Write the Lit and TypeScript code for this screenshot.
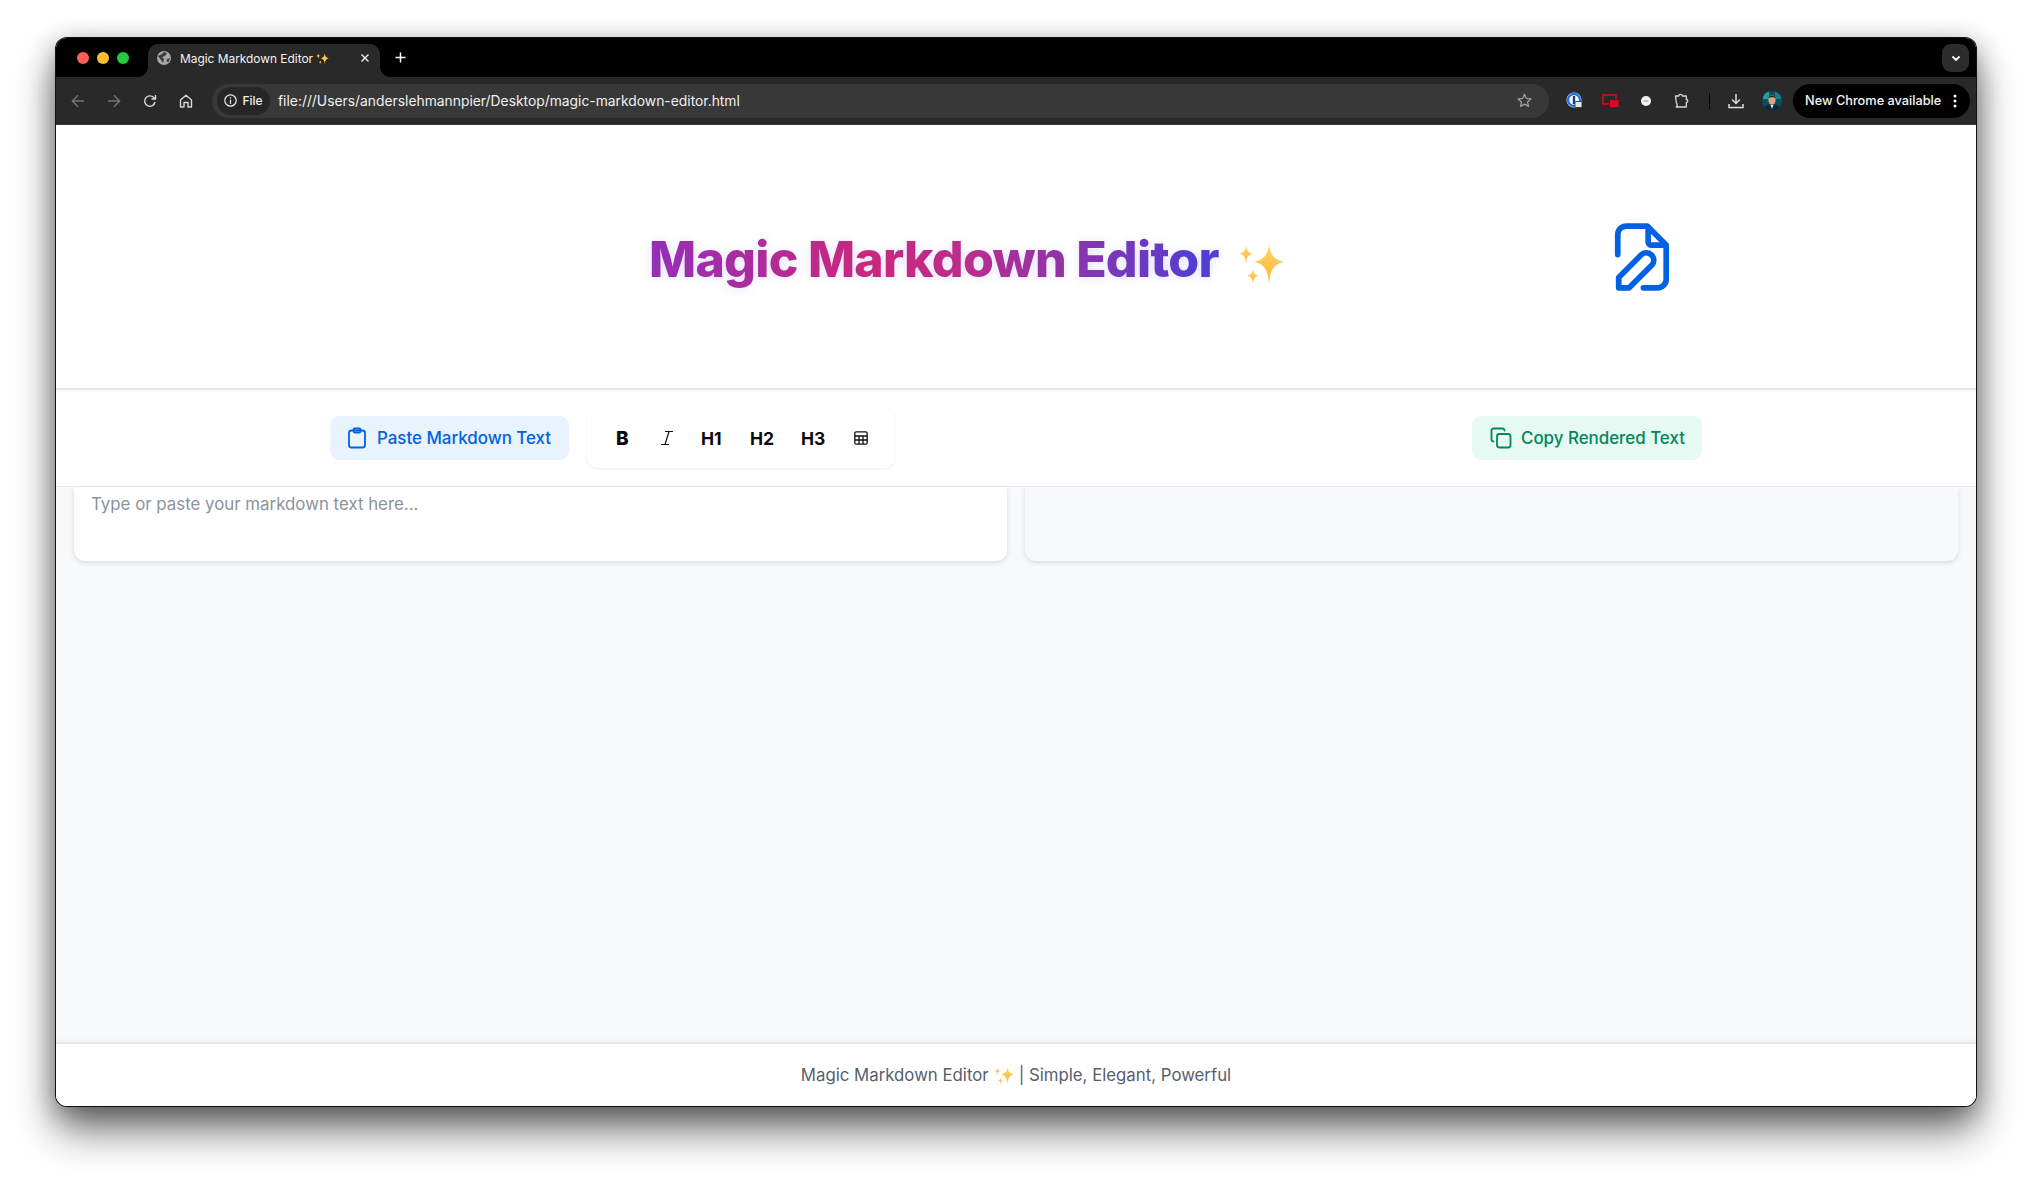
import { LitElement, html, css } from "lit";
import { customElement } from "lit/decorators.js";

const sparkle = (size: number) => html`<svg class="sp" width=${size} height=${size} viewBox="0 0 40 40" aria-hidden="true">
  <defs><linearGradient id="g${size}" x1="0" y1="0" x2="0" y2="1"><stop offset="0" stop-color="#ffd966"/><stop offset="1" stop-color="#fdb33a"/></linearGradient></defs>
  <path d="M27 2 C27.600 12 30 16.500 40 19 C30 21.500 27.800 27 27 39 C26.200 27 24 21.500 14 19 C24 16.500 26.400 12 27 2Z" fill="url(#g${size})"/>
  <path d="M7 4 C7.400 9 8.600 11 12.500 12 C8.600 13 7.400 15 7 21 C6.600 15 5.400 13 1.500 12 C5.400 11 6.600 9 7 4Z" fill="url(#g${size})"/>
  <path d="M13 25 C13.300 28 14.300 30 18 31 C14.300 32 13.300 34 13 39 C12.700 34 11.700 32 8 31 C11.700 30 12.700 28 13 25Z" fill="url(#g${size})"/>
</svg>`;

@customElement("app-root")
export class AppRoot extends LitElement {
  static styles = css`
    :host { display: block; width: 2032px; height: 1179px; overflow: hidden; background: #fff; font-family: Inter, "Liberation Sans", sans-serif; padding: 38px 56px 0 56px; box-sizing: border-box; }
    .win { width: 1920px; height: 1068px; border-radius: 11px; background: #fff; display: flex; flex-direction: column; overflow: hidden; box-shadow: 0 0 0 1px #111, 0 24px 42px rgba(0,0,0,.55), 0 6px 26px rgba(0,0,0,.32); }
    .tabs { height: 39px; background: #000; display: flex; align-items: flex-end; flex: none; position: relative; }
    .lights { display: flex; gap: 8px; padding-left: 21px; align-self: flex-start; margin-top: 14px; box-sizing: border-box; flex: none; width: 92px; }
    .lights i { width: 12px; height: 12px; border-radius: 50%; }
    .tab { width: 232px; height: 33px; background: #292929; border-radius: 10px 10px 0 0; display: flex; align-items: center; color: #f2f2f2; box-sizing: border-box; padding: 0 10px 5px 9px; position: relative; flex: none; }
    .tab::before, .tab::after { content: ""; position: absolute; bottom: 0; width: 10px; height: 10px; }
    .tab::before { left: -10px; background: radial-gradient(circle at 0 0, #000 9.5px, #292929 10px); }
    .tab::after { right: -10px; background: radial-gradient(circle at 100% 0, #000 9.5px, #292929 10px); }
    .tab .title { margin-left: 9px; flex: 1; white-space: nowrap; display: flex; align-items: center; gap: 3px; font-size: 11.9px; }
    .plus { margin: 0 0 0 15px; align-self: center; display: flex; }
    .chev { position: absolute; right: 7px; top: 6px; width: 27px; height: 28px; border-radius: 9px; background: #2c2c2c; display: flex; align-items: center; justify-content: center; }
    .bar { height: 48px; background: #292929; border-bottom: 1px solid #3c3c3c; flex: none; display: flex; align-items: center; box-sizing: border-box; padding: 0 6px 0 4px; }
    .nav { width: 36px; display: flex; justify-content: center; flex: none; }
    .omni { flex: 1; height: 34px; border-radius: 17px; background: #383838; display: flex; align-items: center; margin-left: 8px; padding: 0 17px 0 5px; box-sizing: border-box; color: #f0f0f0; }
    .chip { height: 28px; width: 53px; border-radius: 14px; background: #262626; display: flex; align-items: center; justify-content: center; gap: 5px; font-size: 12px; font-weight: 500; flex: none; box-sizing: border-box; }
    .url { margin-left: 8px; flex: 1; font-size: 13.85px; white-space: nowrap; }
    .ext { display: flex; align-items: center; justify-content: center; width: 36px; flex: none; }
    .ext.first { margin-left: 7px; }
    .sep { width: 1px; height: 16px; background: #000; margin: 0 8px 0 9px; flex: none; }
    .update { height: 34px; width: 177px; border-radius: 17px; background: #000; color: #f4f4f4; font-size: 12.75px; font-weight: 500; display: flex; align-items: center; padding-left: 12px; box-sizing: border-box; margin-left: 3px; flex: none; white-space: nowrap; }
    .update svg { margin-left: 12px; flex: none; }
    .head { height: 265px; flex: none; background: #fff; display: flex; align-items: center; padding: 4px 0 0 593px; box-sizing: border-box; border-bottom: 2px solid #e5e7eb; box-shadow: 0 1px 3px rgba(0,0,0,.06); position: relative; z-index: 3; }
    h1 { margin: 0; font-size: 50px; font-weight: 800; letter-spacing: -0.75px; line-height: 62px; background: linear-gradient(90deg, #932fb8 0%, #c9287c 38%, #bd2c8c 55%, #4a3fd8 100%); -webkit-background-clip: text; background-clip: text; color: transparent; filter: drop-shadow(0 1px 5px rgba(99,90,230,.18)); width: 571px; white-space: nowrap; flex: none; }
    .head .sp { margin: 8px 0 0 18px; flex: none; }
    .doc { margin: -4px 0 0 329px; flex: none; }
    .tools { height: 97px; flex: none; background: #fff; border-bottom: 1px solid #e5e7eb; display: flex; align-items: center; justify-content: space-between; padding: 0 274px; box-sizing: border-box; position: relative; z-index: 2; }
    .left { display: flex; align-items: center; gap: 18px; }
    .btn { height: 44px; border-radius: 9px; display: flex; align-items: center; font-size: 16.9px; font-weight: 500; box-sizing: border-box; white-space: nowrap; flex: none; }
    .btn svg { flex: none; }
    .paste { background: #e9f3fd; color: #0062e3; width: 239px; padding-left: 17px; gap: 10px; }
    .copy { background: #e6f9f3; color: #00875a; width: 230px; padding-left: 18px; gap: 9px; }
    .fmt { width: 308px; height: 60px; border-radius: 11px; background: #fff; box-shadow: 0 1px 3px rgba(0,0,0,.07); display: flex; align-items: center; padding-left: 29px; box-sizing: border-box; color: #0a0a0a; }
    .fmt span { font-size: 17.5px; font-weight: 700; display: block; white-space: nowrap; flex: none; }
    .fmt svg { flex: none; }
    .fmt .b { font-size: 19px; width: 44px; font-weight: 800; }
    .fmt .i { margin-right: 27px; }
    .h1 { width: 49px; }
    .h2 { width: 51px; }
    .h3 { width: 53px; }
    .main { flex: 1; background: #f8f9fb; padding: 0 18px; display: grid; grid-template-columns: 1fr 1fr; gap: 18px; align-items: start; }
    .panel { height: 74px; border-radius: 0 0 11px 11px; box-shadow: 0 2px 5px rgba(0,0,0,.12); box-sizing: border-box; }
    .ed { background: #fff; color: #8b929e; font-size: 16.85px; padding: 7px 17px; white-space: nowrap; }
    .pre { background: #f8f9fb; }
    .foot { height: 64px; flex: none; background: #fff; border-top: 2px solid #e5e7eb; box-sizing: border-box; display: flex; align-items: center; justify-content: center; color: #56606e; font-size: 16.8px; gap: 5px; white-space: nowrap; box-shadow: 0 -1px 4px rgba(0,0,0,.05); }
  `;

  render() {
    return html`<div class="win">
      <div class="tabs">
        <div class="lights"><i style="background:#ff5f57"></i><i style="background:#febc2e"></i><i style="background:#28c840"></i></div>
        <div class="tab">
          <svg width="14" height="14" viewBox="0 0 14 14"><circle cx="7" cy="7" r="7" fill="#a8a8a8"/><path d="M1 5 L5 3 L7 1 L10 2 L8 5 L5 6 L7 8 L6 12 L4 9 Z M10 8 L13 7 L11.500 11 L9.500 10.500Z" fill="#3a3a3a"/></svg>
          <div class="title">Magic Markdown Editor ${sparkle(13)}</div>
          <svg width="10" height="10" viewBox="0 0 10 10"><path d="M1.500 1.500 8.500 8.500M8.500 1.500 1.500 8.500" stroke="#eee" stroke-width="1.400"/></svg>
        </div>
        <div class="plus"><svg width="11" height="11" viewBox="0 0 11 11"><path d="M5.500 .5v10M.5 5.500h10" stroke="#fff" stroke-width="1.500"/></svg></div>
        <div class="chev"><svg width="10" height="7" viewBox="0 0 10 7"><path d="M1.500 1.500 5 5l3.500-3.500" fill="none" stroke="#fff" stroke-width="1.800"/></svg></div>
      </div>
      <div class="bar">
        <div class="nav"><svg width="14" height="14" viewBox="0 0 14 14"><path d="M13 7H1.500M7 1.200 1.300 7 7 12.800" fill="none" stroke="#757575" stroke-width="1.400"/></svg></div>
        <div class="nav"><svg width="14" height="14" viewBox="0 0 14 14"><path d="M1 7h11.500M7 1.200 12.700 7 7 12.800" fill="none" stroke="#757575" stroke-width="1.400"/></svg></div>
        <div class="nav"><svg width="14" height="14" viewBox="0 0 14 14"><path d="M12 8a5.200 5.200 0 1 1-1.300-4.500L12.500 5M12.500 1v4h-4" fill="none" stroke="#d8d8d8" stroke-width="1.400"/></svg></div>
        <div class="nav"><svg width="14" height="14" viewBox="0 0 14 14"><path d="M1.500 6 7 1.300 12.500 6v7H9V8.500H5V13H1.500Z" fill="none" stroke="#d8d8d8" stroke-width="1.400" stroke-linejoin="round"/></svg></div>
        <div class="omni">
          <div class="chip"><svg width="13" height="13" viewBox="0 0 13 13"><circle cx="6.500" cy="6.500" r="5.700" fill="none" stroke="#eee" stroke-width="1.200"/><path d="M6.500 5.800v4M6.500 3.200v1.300" stroke="#eee" stroke-width="1.300"/></svg>File</div>
          <div class="url">file:///Users/anderslehmannpier/Desktop/magic-markdown-editor.html</div>
          <svg width="15" height="15" viewBox="0 0 15 15"><path d="M7.500 1.300 9.400 5.400 13.900 5.900 10.500 8.900 11.500 13.400 7.500 11.100 3.500 13.400 4.500 8.900 1.100 5.900 5.600 5.400Z" fill="none" stroke="#a0a0a0" stroke-width="1.300" stroke-linejoin="round"/></svg>
        </div>
        <div class="ext first"><svg width="17" height="17" viewBox="0 0 17 17"><circle cx="8" cy="8" r="7.500" fill="#fff"/><circle cx="8" cy="8" r="6" fill="none" stroke="#1a73e8" stroke-width="2.400"/><rect x="6.800" y="4" width="2.400" height="8" fill="#1a3a78"/><rect x="9" y="9.500" width="7" height="6" rx="1" fill="#e8e8e8" stroke="#292929" stroke-width=".8"/></svg></div>
        <div class="ext"><svg width="17" height="14" viewBox="0 0 17 14"><path d="M7 10H1V1h13v4" fill="none" stroke="#e0071c" stroke-width="1.600"/><rect x="8" y="6" width="8.500" height="7" fill="#e0071c"/></svg></div>
        <div class="ext"><svg width="12" height="12" viewBox="0 0 12 12"><circle cx="6" cy="6" r="5" fill="#f4f4f4"/><path d="M3.500 6h5" stroke="#8a8a8a" stroke-width="1"/></svg></div>
        <div class="ext"><svg width="16" height="16" viewBox="0 0 16 16"><path d="M1.500 3h3.200C4.700 .8 8.300 .8 8.300 3h4v3.500c2 0 2 3 0 3V14h-10c1-1 1-3 0-4.500Z" fill="none" stroke="#d8d8d8" stroke-width="1.300" stroke-linejoin="round"/></svg></div>
        <div class="sep"></div>
        <div class="ext"><svg width="16" height="16" viewBox="0 0 16 16"><path d="M8 1v9M4 6.500 8 10.500l4-4M1 11v3.500h14V11" fill="none" stroke="#dcdcdc" stroke-width="1.500"/></svg></div>
        <div class="ext"><svg width="20" height="20" viewBox="0 0 20 20"><circle cx="10" cy="10" r="10" fill="#0e4f5c"/><path d="M1 6a10 10 0 0 1 6-5.500V8H1Z" fill="#1aa1a6"/><path d="M19 6a10 10 0 0 0-6-5.500V8h6Z" fill="#13808a"/><path d="M2.500 16.600c1-3 4-3.100 7.500-3.100s6.500.1 7.500 3.100a10 10 0 0 1-15 0Z" fill="#13263f"/><path d="M8.500 14 10 18l1.500-4Z" fill="#dfe8ef"/><ellipse cx="10" cy="9" rx="3.600" ry="4.800" fill="#d9a58a"/><path d="M6.300 7.500C6.500 3.500 13.500 3.500 13.700 7.500 12 5.800 8 5.800 6.300 7.500Z" fill="#2a2320"/></svg></div>
        <div class="update">New Chrome available<svg width="4" height="14" viewBox="0 0 4 14"><circle cx="2" cy="2" r="1.500" fill="#fff"/><circle cx="2" cy="7" r="1.500" fill="#fff"/><circle cx="2" cy="12" r="1.500" fill="#fff"/></svg></div>
      </div>
      <div class="head">
        <h1>Magic Markdown Editor</h1>
        ${sparkle(46)}
        <svg class="doc" width="57" height="69" viewBox="0 0 60 72" fill="none" stroke="#0062e3" stroke-width="6" stroke-linecap="round" stroke-linejoin="round">
          <path d="M5 34V13a9 9 0 0 1 9-9h22l20 20v36a9 9 0 0 1-9 9H32"/>
          <path d="M37 5v16a3 3 0 0 0 3 3h15"/>
          <path d="M30 34 6 58v11h11L41 45a7.800 7.800 0 0 0-11-11Z"/>
        </svg>
      </div>
      <div class="tools">
        <div class="left">
          <div class="btn paste"><svg width="20" height="22" viewBox="0 0 20 22" fill="none" stroke="#0062e3" stroke-width="1.800" stroke-linejoin="round"><rect x="2" y="3.500" width="16" height="17" rx="2.500"/><rect x="6.500" y="1.500" width="7" height="4" rx="1.200"/></svg><span>Paste Markdown Text</span></div>
          <div class="fmt">
            <span class="b">B</span>
            <svg class="i" width="14" height="16" viewBox="0 0 14 16" fill="none" stroke="#111" stroke-width="1.200"><path d="M5 1.500h8M1 14.500h8M9 1.500 5 14.500"/></svg>
            <span class="h1">H1</span><span class="h2">H2</span><span class="h3">H3</span>
            <svg width="14" height="14" viewBox="0 0 14 14" fill="none" stroke="#111" stroke-width="1.300"><rect x=".8" y=".8" width="12.400" height="12.400" rx="1.500"/><path d="M.8 5h12.400M.8 9h12.400M5 5v8M9 5v8"/></svg>
          </div>
        </div>
        <div class="btn copy"><svg width="22" height="22" viewBox="0 0 22 22" fill="none" stroke="#00875a" stroke-width="1.800" stroke-linecap="round"><rect x="7" y="7" width="13.500" height="13.500" rx="2.500"/><path d="M3.500 14.500h-.2A1.800 1.800 0 0 1 1.500 12.700V3.300A1.800 1.800 0 0 1 3.300 1.500h9.400a1.800 1.800 0 0 1 1.800 1.800v.2"/></svg><span>Copy Rendered Text</span></div>
      </div>
      <div class="main">
        <div class="panel ed">Type or paste your markdown text here...</div>
        <div class="panel pre"></div>
      </div>
      <div class="foot"><span>Magic Markdown Editor</span>${sparkle(20)}<span>| Simple, Elegant, Powerful</span></div>
    </div>`;
  }
}
